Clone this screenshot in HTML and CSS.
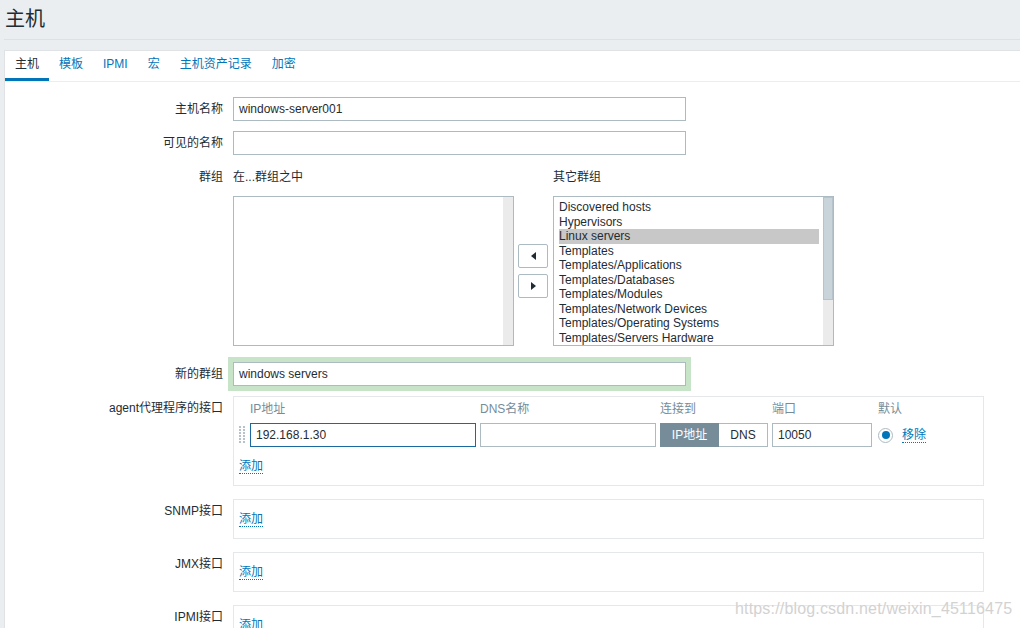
FILE: index.html
```html
<!DOCTYPE html>
<html lang="zh">
<head>
<meta charset="utf-8">
<title>主机</title>
<link rel="stylesheet" href="styles.css">
</head>
<body>
<div class="page">
  <h1 class="title">主机</h1>
  <div class="panel">
    <ul class="tabs">
      <li class="tab active">主机</li>
      <li class="tab">模板</li>
      <li class="tab">IPMI</li>
      <li class="tab">宏</li>
      <li class="tab">主机资产记录</li>
      <li class="tab">加密</li>
    </ul>
    <div class="form">
      <div class="row">
        <div class="label">主机名称</div>
        <div class="input wide">windows-server001</div>
      </div>
      <div class="row">
        <div class="label">可见的名称</div>
        <div class="input wide"></div>
      </div>
      <div class="row">
        <div class="label">群组</div>
        <div class="groups">
          <div class="group-col">
            <div class="group-head">在...群组之中</div>
            <div class="listbox">
              <div class="list-items"></div>
              <div class="track"></div>
            </div>
          </div>
          <div class="arrows">
            <button class="arrow-btn"><span class="tri left"></span></button>
            <button class="arrow-btn"><span class="tri right"></span></button>
          </div>
          <div class="group-col">
            <div class="group-head">其它群组</div>
            <div class="listbox">
              <div class="list-items">
                <div class="opt">Discovered hosts</div>
                <div class="opt">Hypervisors</div>
                <div class="opt selected">Linux servers</div>
                <div class="opt">Templates</div>
                <div class="opt">Templates/Applications</div>
                <div class="opt">Templates/Databases</div>
                <div class="opt">Templates/Modules</div>
                <div class="opt">Templates/Network Devices</div>
                <div class="opt">Templates/Operating Systems</div>
                <div class="opt">Templates/Servers Hardware</div>
              </div>
              <div class="track"><div class="thumb"></div></div>
            </div>
          </div>
        </div>
      </div>
      <div class="row new-group">
        <div class="label">新的群组</div>
        <div class="glow"><div class="input wide">windows servers</div></div>
      </div>
      <div class="row iface-row">
        <div class="label">agent代理程序的接口</div>
        <div class="iface">
          <div class="iface-grid">
            <div></div>
            <div class="th">IP地址</div>
            <div class="th">DNS名称</div>
            <div class="th">连接到</div>
            <div class="th">端口</div>
            <div class="th">默认</div>
            <div class="handle">
              <svg width="6" height="18" viewBox="0 0 6 18">
                <rect x="0" y="0" width="2" height="2"/><rect x="4" y="0" width="2" height="2"/>
                <rect x="0" y="3" width="2" height="2"/><rect x="4" y="3" width="2" height="2"/>
                <rect x="0" y="6" width="2" height="2"/><rect x="4" y="6" width="2" height="2"/>
                <rect x="0" y="9" width="2" height="2"/><rect x="4" y="9" width="2" height="2"/>
                <rect x="0" y="12" width="2" height="2"/><rect x="4" y="12" width="2" height="2"/>
                <rect x="0" y="15" width="2" height="2"/><rect x="4" y="15" width="2" height="2"/>
              </svg>
            </div>
            <div class="input ip focus">192.168.1.30</div>
            <div class="input dns"></div>
            <div class="seg">
              <span class="seg-item on">IP地址</span>
              <span class="seg-item">DNS</span>
            </div>
            <div class="input port">10050</div>
            <div class="def">
              <span class="radio"><span class="dot"></span></span>
              <span class="link">移除</span>
            </div>
          </div>
          <div class="add"><span class="link">添加</span></div>
        </div>
      </div>
      <div class="row iface-row">
        <div class="label">SNMP接口</div>
        <div class="iface empty"><div class="add"><span class="link">添加</span></div></div>
      </div>
      <div class="row iface-row">
        <div class="label">JMX接口</div>
        <div class="iface empty"><div class="add"><span class="link">添加</span></div></div>
      </div>
      <div class="row iface-row">
        <div class="label">IPMI接口</div>
        <div class="iface empty"><div class="add"><span class="link">添加</span></div></div>
      </div>
    </div>
  </div>
  <div class="watermark">https://blog.csdn.net/weixin_45116475</div>
</div>
</body>
</html>
```

FILE: styles.css
```css
html, body {
  margin: 0;
  padding: 0;
  height: 628px;
  overflow: hidden;
}
body {
  background: #ebeef0;
  font-family: "Liberation Sans", Arial, "Noto Sans CJK SC", sans-serif;
  font-size: 12px;
  color: #1f2c33;
}
.page {
  position: relative;
}
.title {
  margin: 0 0 10px 4px;
  padding-left: 1px;
  height: 39px;
  line-height: 39px;
  font-size: 20px;
  font-weight: normal;
  color: #1f2c33;
  border-bottom: 1px solid #dde1e4;
}
.panel {
  margin-left: 4px;
  background: #fff;
  border: 1px solid #dfe3e6;
  border-right: none;
  min-height: 700px;
}
.tabs {
  list-style: none;
  margin: 0;
  padding: 0;
  display: flex;
  height: 30px;
  border-bottom: 1px solid #ebeef0;
}
.tab {
  padding: 0 10px;
  line-height: 27px;
  height: 27px;
  border-bottom: 3px solid transparent;
  color: #0275b8;
}
.tab.active {
  color: #1f2c33;
  border-bottom-color: #0275b8;
}
.form {
  padding-top: 15px;
}
.row {
  display: flex;
  align-items: flex-start;
  margin-bottom: 10px;
}
.label {
  width: 228px;
  flex: none;
  box-sizing: border-box;
  padding-right: 10px;
  text-align: right;
  line-height: 24px;
  white-space: nowrap;
}
.input {
  box-sizing: border-box;
  height: 24px;
  line-height: 22px;
  border: 1px solid #acbbc2;
  background: #fff;
  padding: 0 5px;
  white-space: nowrap;
  overflow: hidden;
}
.input.wide {
  width: 453px;
}
.groups {
  display: flex;
  align-items: flex-end;
}
.group-head {
  line-height: 24px;
  margin-bottom: 7px;
}
.listbox {
  box-sizing: border-box;
  width: 281px;
  height: 150px;
  border: 1px solid #acbbc2;
  display: flex;
  overflow: hidden;
}
.list-items {
  flex: 1;
  padding: 3px 4px 0 5px;
}
.opt {
  line-height: 14.5px;
  height: 14.5px;
  white-space: nowrap;
}
.opt.selected {
  background: #c8c8c8;
}
.track {
  width: 10px;
  background: #ebebeb;
  flex: none;
}
.thumb {
  box-sizing: border-box;
  height: 103px;
  background: #c9d3da;
  border: 1px solid #b7c3cb;
}
.arrows {
  box-sizing: border-box;
  width: 39px;
  height: 150px;
  padding-left: 4px;
  display: flex;
  flex-direction: column;
  align-items: flex-start;
  justify-content: center;
  gap: 6px;
}
.arrow-btn {
  box-sizing: border-box;
  width: 30px;
  height: 24px;
  padding: 0;
  background: #fff;
  border: 1px solid #acbbc2;
  border-radius: 2px;
  display: flex;
  align-items: center;
  justify-content: center;
}
.tri {
  width: 0;
  height: 0;
  border-top: 4px solid transparent;
  border-bottom: 4px solid transparent;
}
.tri.left {
  border-right: 5px solid #1f2c33;
}
.tri.right {
  border-left: 5px solid #1f2c33;
}
.new-group {
  margin-top: 16px;
}
.glow {
  box-shadow: 0 0 0 5px #c7e3c8;
}
.iface-row {
  margin-bottom: 13px;
}
.iface {
  box-sizing: border-box;
  width: 751px;
  border: 1px solid #e4e8ea;
  padding: 0 5px 7px;
}
.iface.empty {
  padding-top: 7px;
}
.iface-grid {
  display: grid;
  grid-template-columns: 11px 230px 180px 112px 106px auto;
  grid-template-rows: 24px 24px;
  row-gap: 2px;
  margin-bottom: 7px;
}
.th {
  line-height: 24px;
  color: #768d99;
  white-space: nowrap;
}
.handle {
  display: flex;
  align-items: center;
}
.handle svg {
  fill: #b6c2c9;
}
.input.ip {
  width: 226px;
}
.input.focus {
  border-color: #1a6aa0;
}
.input.dns {
  width: 176px;
}
.input.port {
  width: 100px;
}
.seg {
  display: flex;
  width: 108px;
  height: 24px;
}
.seg-item {
  box-sizing: border-box;
  height: 24px;
  line-height: 22px;
  text-align: center;
  border: 1px solid #acbbc2;
}
.seg-item.on {
  width: 59px;
  background: #768d99;
  border-color: #768d99;
  color: #fff;
}
.seg-item:not(.on) {
  width: 49px;
  border-left: none;
  color: #1f2c33;
}
.def {
  display: flex;
  align-items: center;
  gap: 9px;
  height: 24px;
}
.radio {
  box-sizing: border-box;
  width: 15px;
  height: 15px;
  border: 1px solid #acbbc2;
  border-radius: 50%;
  display: flex;
  align-items: center;
  justify-content: center;
}
.dot {
  width: 8px;
  height: 8px;
  border-radius: 50%;
  background: #0275b8;
}
.add {
  line-height: 24px;
}
.link {
  color: #0275b8;
  border-bottom: 1px dotted #0275b8;
  line-height: 14px;
  display: inline-block;
}
.watermark {
  position: absolute;
  left: 735px;
  top: 600px;
  font-size: 16px;
  line-height: 18px;
  letter-spacing: 0.17px;
  color: #d2d2d2;
  text-shadow: 0 0 2px #fff;
  white-space: nowrap;
}
```
